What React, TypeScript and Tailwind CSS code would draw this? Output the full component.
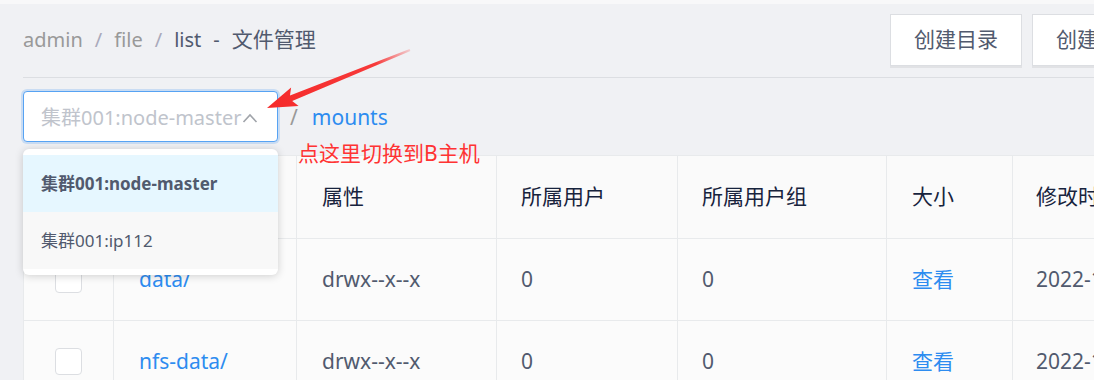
import { type FC } from 'react';

type Row = {
  name: string;
  mode: string;
  user: string;
  group: string;
  time: string;
};

const rows: Row[] = [
  { name: 'data/', mode: 'drwx--x--x', user: '0', group: '0', time: '2022-11-02 10:21:36' },
  { name: 'nfs-data/', mode: 'drwx--x--x', user: '0', group: '0', time: '2022-11-02 10:21:36' },
];

const cols = 'grid grid-cols-[90px_183px_200px_181px_209px_126px_240px]';

const Checkbox: FC = () => (
  <span className="block w-[27px] h-[27px] rounded-[4px] border border-[#dcdee2] bg-white" />
);

const Arrow: FC = () => (
  <svg className="absolute left-0 top-0 pointer-events-none" width="1094" height="380" viewBox="0 0 1094 380">
    <defs>
      <linearGradient id="arrowFade" x1="267" y1="104" x2="412" y2="45" gradientUnits="userSpaceOnUse">
        <stop offset="0" stopColor="#f52a2a" />
        <stop offset="0.75" stopColor="#f73a3a" />
        <stop offset="1" stopColor="#f73a3a" stopOpacity="0.15" />
      </linearGradient>
    </defs>
    <polygon
      points="267,104 298.6,102 292.2,97 410.4,46.9 409.6,45.1 290,91.4 291.1,83.4"
      fill="url(#arrowFade)"
    />
  </svg>
);

const FileTable: FC = () => (
  <div className="w-[1229px] border-l border-t border-[#e8eaec] bg-[#fbfbfb] text-[21px] text-[#515a6e]">
    <div className={`${cols} h-[83px] border-b border-[#e8eaec] bg-[#fafafa] text-[#17233d]`}>
      <div className="flex items-center justify-center border-r border-[#e8eaec]">
        <Checkbox />
      </div>
      <div className="flex items-center pl-[25px] border-r border-[#e8eaec]">文件名</div>
      <div className="flex items-center pl-[25px] border-r border-[#e8eaec]">属性</div>
      <div className="flex items-center pl-[24px] border-r border-[#e8eaec]">所属用户</div>
      <div className="flex items-center pl-[24px] border-r border-[#e8eaec]">所属用户组</div>
      <div className="flex items-center pl-[25px] border-r border-[#e8eaec]">大小</div>
      <div className="flex items-center pl-[23px]">修改时间</div>
    </div>
    {rows.map((row) => (
      <div key={row.name} className={`${cols} h-[82px] border-b border-[#e8eaec]`}>
        <div className="flex items-center justify-center border-r border-[#e8eaec]">
          <Checkbox />
        </div>
        <div className="flex items-center pl-[25px] border-r border-[#e8eaec] text-[#2d8cf0]">{row.name}</div>
        <div className="flex items-center pl-[25px] border-r border-[#e8eaec]">{row.mode}</div>
        <div className="flex items-center pl-[24px] border-r border-[#e8eaec]">{row.user}</div>
        <div className="flex items-center pl-[24px] border-r border-[#e8eaec]">{row.group}</div>
        <div className="flex items-center pl-[25px] border-r border-[#e8eaec] text-[#2d8cf0]">查看</div>
        <div className="flex items-center pl-[23px] whitespace-nowrap">{row.time}</div>
      </div>
    ))}
  </div>
);

export default function App() {
  return (
    <div
      className="relative w-[1094px] h-[380px] overflow-hidden bg-[#f0f1f4] border-t-4 border-[#f8f8f9]"
      style={{ fontFamily: '"Noto Sans", "Noto Sans CJK SC", sans-serif' }}
    >
      <div className="pl-[23px]">
        <div className="flex items-center h-[74px] w-[1300px] border-b border-[#dcdee2]">
          <div className="w-[867px] shrink-0 flex items-center text-[20px] text-[#999] pb-[1px]">
            <span>admin</span>
            <span className="mx-[12px] text-[#aab]">/</span>
            <span>file</span>
            <span className="mx-[12px] text-[#aab]">/</span>
            <span className="text-[#515a6e]">list</span>
            <span className="mx-[12px] text-[#515a6e]">-</span>
            <span className="text-[#515a6e] text-[21px]">文件管理</span>
          </div>
          <div className="flex gap-[10px] shrink-0 pb-[2px]">
            <button className="w-[132px] h-[52px] bg-white border border-[#dcdee2] text-[21px] text-[#515a6e] shadow-[0_2px_0_rgba(0,0,0,0.06)]">
              创建目录
            </button>
            <button className="w-[132px] h-[52px] bg-white border border-[#dcdee2] text-[21px] text-[#515a6e] shadow-[0_2px_0_rgba(0,0,0,0.06)]">
              创建文件
            </button>
          </div>
        </div>

        <div className="flex items-center mt-[13px] h-[51px]">
          <div className="flex items-center w-[255px] h-[51px] pl-[17px] pr-[19px] pt-[3px] bg-white border border-[#57a3f3] rounded-[4px] shadow-[0_0_0_2px_rgba(45,140,240,0.2)]">
            <span className="flex-1 text-[20px] text-[#c0c4cc] whitespace-nowrap">集群001:node-master</span>
            <svg width="16" height="10" viewBox="0 0 16 10" className="shrink-0">
              <polyline points="1.5,9 8,2 14.5,9" fill="none" stroke="#a0a4aa" strokeWidth="1.6" />
            </svg>
          </div>
          <span className="ml-[12px] pt-[3px] text-[21px] text-[#999]">/</span>
          <span className="ml-[14px] pt-[3px] text-[21px] text-[#2d8cf0]">mounts</span>
        </div>

        <div className="mt-[13px]">
          <FileTable />
        </div>
      </div>

      <div className="absolute left-[23px] top-[145px] w-[255px] h-[126px] bg-white rounded-[6px] shadow-[0_1px_8px_rgba(0,0,0,0.18)] py-[6px] text-[17px] text-[#515a6e]">
        <div className="h-[57px] flex items-center pl-[18px] pt-[1px] bg-[#e6f7ff] font-bold">集群001:node-master</div>
        <div className="h-[57px] flex items-center pl-[18px] pt-[1px] bg-[#f8f8f8]">集群001:ip112</div>
      </div>

      <div className="absolute left-[298px] top-[134px] text-[21px] text-[#ff3333] whitespace-nowrap">
        点这里切换到B主机
      </div>

      <Arrow />
    </div>
  );
}
